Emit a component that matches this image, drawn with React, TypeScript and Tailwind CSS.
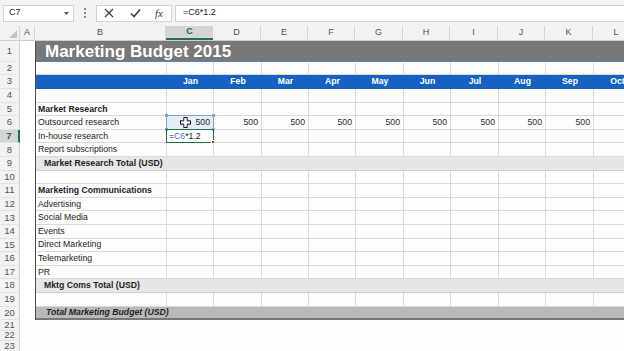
import React from "react";

const COLS = [47, 48, 47, 47, 48, 47, 48, 47, 48, 47];
const LETTERS = ["C", "D", "E", "F", "G", "H", "I", "J", "K", "L"];
const MONTHS = ["Jan", "Feb", "Mar", "Apr", "May", "Jun", "Jul", "Aug", "Sep", "Oct"];

type Kind = "title" | "blank" | "months" | "item" | "total" | "grand";
type RowDef = { n: number; h: number; kind: Kind; label?: string; bold?: boolean; values?: boolean };

const R = 13.6;
const ROWS: RowDef[] = [
  { n: 1, h: 21, kind: "title" },
  { n: 2, h: 13, kind: "blank" },
  { n: 3, h: 14, kind: "months" },
  { n: 4, h: R, kind: "blank" },
  { n: 5, h: R, kind: "item", label: "Market Research", bold: true },
  { n: 6, h: R, kind: "item", label: "Outsourced research", values: true },
  { n: 7, h: R, kind: "item", label: "In-house research" },
  { n: 8, h: R, kind: "item", label: "Report subscriptions" },
  { n: 9, h: R, kind: "total", label: "Market Research Total (USD)" },
  { n: 10, h: R, kind: "blank" },
  { n: 11, h: R, kind: "item", label: "Marketing Communications", bold: true },
  { n: 12, h: R, kind: "item", label: "Advertising" },
  { n: 13, h: R, kind: "item", label: "Social Media" },
  { n: 14, h: R, kind: "item", label: "Events" },
  { n: 15, h: R, kind: "item", label: "Direct Marketing" },
  { n: 16, h: R, kind: "item", label: "Telemarketing" },
  { n: 17, h: R, kind: "item", label: "PR" },
  { n: 18, h: R, kind: "total", label: "Mktg Coms Total (USD)" },
  { n: 19, h: R, kind: "blank" },
  { n: 20, h: R, kind: "grand", label: "Total Marketing Budget (USD)" },
];

function MoveCursor() {
  return (
    <svg width="11" height="11" viewBox="0 0 11 11">
      <path
        d="M3.8 0.5 H7.2 V3.8 H10.5 V7.2 H7.2 V10.5 H3.8 V7.2 H0.5 V3.8 H3.8 Z"
        fill="#ffffff"
        stroke="#111111"
        strokeWidth="1"
      />
    </svg>
  );
}

function RowHeader({ n, h }: { n: number; h: number }) {
  const sel = n === 7;
  return (
    <div
      style={{ height: h }}
      className={
        "w-[20px] shrink-0 flex items-center justify-center text-[9.5px] border-b border-[#e3e3e3] " +
        (sel
          ? "bg-[#d4d4d4] text-[#1d6b38] font-bold border-r-2 border-r-[#217346]"
          : "bg-[#f3f3f3] text-[#555555] border-r border-r-[#cfcfcf]")
      }
    >
      {n}
    </div>
  );
}

function SheetRow({ r }: { r: RowDef }) {
  let content: React.ReactNode;
  if (r.kind === "title") {
    content = (
      <div className="flex-1 flex items-center bg-[#787878] border-b border-[#4f86cf] pl-[9px]">
        <span className="text-[17px] font-bold text-white leading-none">Marketing Budget 2015</span>
      </div>
    );
  } else if (r.kind === "months") {
    content = (
      <div className="flex-1 flex bg-[#1762c0]">
        <div className="w-[131px] shrink-0" />
        {COLS.map((w, i) => (
          <div
            key={i}
            style={{ width: w }}
            className="shrink-0 flex items-center justify-center text-[8.7px] font-bold text-white"
          >
            {MONTHS[i]}
          </div>
        ))}
      </div>
    );
  } else if (r.kind === "total" || r.kind === "grand") {
    const grand = r.kind === "grand";
    content = (
      <div
        className={
          "flex-1 flex items-center " +
          (grand
            ? "bg-[#b9b9b9] border-b-2 border-[#767676] pl-[10px] italic"
            : "bg-[#e7e7e7] border-b border-[#cfcfcf] pl-[8px]")
        }
      >
        <span className="text-[8.7px] font-bold text-[#1e1e1e] leading-none">{r.label}</span>
      </div>
    );
  } else {
    content = (
      <div className="flex-1 flex">
        <div className="w-[131px] shrink-0 flex items-center pl-[2px] border-r border-b border-[#dadada]">
          <span className={"text-[8.7px] text-[#222222] leading-none " + (r.bold ? "font-bold" : "")}>
            {r.label}
          </span>
        </div>
        {COLS.map((w, i) => {
          const c6 = r.n === 6 && i === 0;
          const c7 = r.n === 7 && i === 0;
          return (
            <div
              key={i}
              style={{ width: w }}
              className={
                "relative shrink-0 flex items-center border-r border-b border-[#dadada] text-[8.7px] text-[#2a2a2a] " +
                (c6 ? "bg-[#e6edf8] " : "") +
                (c7 ? "justify-start pl-[2px]" : "justify-end pr-[3px]")
              }
            >
              {c6 && (
                <>
                  <div className="absolute inset-[-1px] border border-[#7fa3d9] pointer-events-none" />
                  <div className="absolute left-[-2px] top-[-2px] w-[3px] h-[3px] bg-[#7fa3d9]" />
                  <div className="absolute right-[-2px] top-[-2px] w-[3px] h-[3px] bg-[#7fa3d9]" />
                  <div className="absolute left-[-2px] bottom-[-2px] w-[3px] h-[3px] bg-[#7fa3d9]" />
                  <div className="absolute right-[-2px] bottom-[-2px] w-[3px] h-[3px] bg-[#7fa3d9]" />
                  <div className="absolute left-[13px] top-[1px]">
                    <MoveCursor />
                  </div>
                </>
              )}
              {c7 && (
                <>
                  <div className="absolute inset-[-1px] border-[1.5px] border-[#217346] pointer-events-none" />
                  <div className="absolute right-[-2px] bottom-[-2px] w-[4px] h-[4px] bg-[#217346] border border-white" />
                  <span className="leading-none text-[#222222]">
                    =<span className="text-[#4a78d0]">C6</span>*1.2
                  </span>
                </>
              )}
              {r.values && i < 9 ? <span className="leading-none">500</span> : null}
            </div>
          );
        })}
      </div>
    );
  }

  return (
    <div className="flex shrink-0" style={{ height: r.h }}>
      <RowHeader n={r.n} h={r.h} />
      <div className="w-[15px] shrink-0 bg-white" />
      <div className="flex-1 flex border-l-[1.5px] border-[#4d4d4d] min-w-0">{content}</div>
    </div>
  );
}

export default function App() {
  return (
    <div
      className="w-[624px] h-[351px] overflow-hidden bg-[#fdfdfc] flex flex-col"
      style={{ fontFamily: '"Liberation Sans", Arial, sans-serif' }}
    >
      {/* Formula bar */}
      <div className="h-[26px] shrink-0 bg-[#f3f3f3] flex items-center">
        <div className="ml-[3px] w-[71px] h-[17px] bg-white border border-[#d3d3d3] flex items-center justify-between pl-[5px] pr-[4px]">
          <span className="text-[9px] text-[#222222]">C7</span>
          <svg width="5" height="3" viewBox="0 0 5 3">
            <path d="M0 0 H5 L2.5 3 Z" fill="#555555" />
          </svg>
        </div>
        <div className="ml-[10px] w-[2px] flex flex-col gap-[2px]">
          <div className="w-[2px] h-[2px] bg-[#8a8a8a]" />
          <div className="w-[2px] h-[2px] bg-[#8a8a8a]" />
          <div className="w-[2px] h-[2px] bg-[#8a8a8a]" />
        </div>
        <div className="ml-[10px] w-[76px] h-[17px] bg-white border border-[#d3d3d3] flex items-center">
          <div className="ml-[7px]">
            <svg width="10" height="10" viewBox="0 0 10 10">
              <path d="M1 1 L9 9 M9 1 L1 9" stroke="#3c3c3c" strokeWidth="1.2" />
            </svg>
          </div>
          <div className="ml-[16px]">
            <svg width="11" height="10" viewBox="0 0 11 10">
              <path d="M1 5.5 L4 8.5 L10 1.5" stroke="#3c3c3c" strokeWidth="1.6" fill="none" />
            </svg>
          </div>
          <span
            className="ml-[14px] text-[11px] italic text-[#3c3c3c] leading-none"
            style={{ fontFamily: '"Liberation Serif", serif' }}
          >
            fx
          </span>
        </div>
        <div className="ml-[3px] flex-1 h-[17px] bg-white border-y border-l border-[#d3d3d3] flex items-center pl-[7px]">
          <span className="text-[9px] text-[#222222]">=C6*1.2</span>
        </div>
      </div>

      {/* Column headers */}
      <div className="h-[15px] shrink-0 flex bg-[#f3f3f3] border-b border-[#cdcdcd] text-[9px] text-[#555555]">
        <div className="w-[20px] shrink-0 relative border-r border-[#d6d6d6]">
          <svg className="absolute right-[2px] bottom-[2px]" width="8" height="8" viewBox="0 0 8 8">
            <path d="M8 0 V8 H0 Z" fill="#c4c4c4" />
          </svg>
        </div>
        <div className="w-[15px] shrink-0 flex items-center justify-center border-r border-[#d6d6d6]">A</div>
        <div className="w-[131px] shrink-0 flex items-center justify-center border-r border-[#d6d6d6]">B</div>
        {COLS.map((w, i) => (
          <div
            key={i}
            style={{ width: w }}
            className={
              "shrink-0 flex items-center justify-center " +
              (i === 0
                ? "bg-[#d4d4d4] text-[#1d6b38] font-bold border-b-2 border-[#217346]"
                : "border-r border-[#d6d6d6]")
            }
          >
            {LETTERS[i]}
          </div>
        ))}
      </div>

      {/* Rows */}
      {ROWS.map((r) => (
        <SheetRow key={r.n} r={r} />
      ))}
      {[21, 22, 23].map((n) => (
        <div key={n} className="flex shrink-0 h-[10.5px]">
          <RowHeader n={n} h={10.5} />
          <div className="flex-1 bg-[#fdfdfc]" />
        </div>
      ))}
    </div>
  );
}
